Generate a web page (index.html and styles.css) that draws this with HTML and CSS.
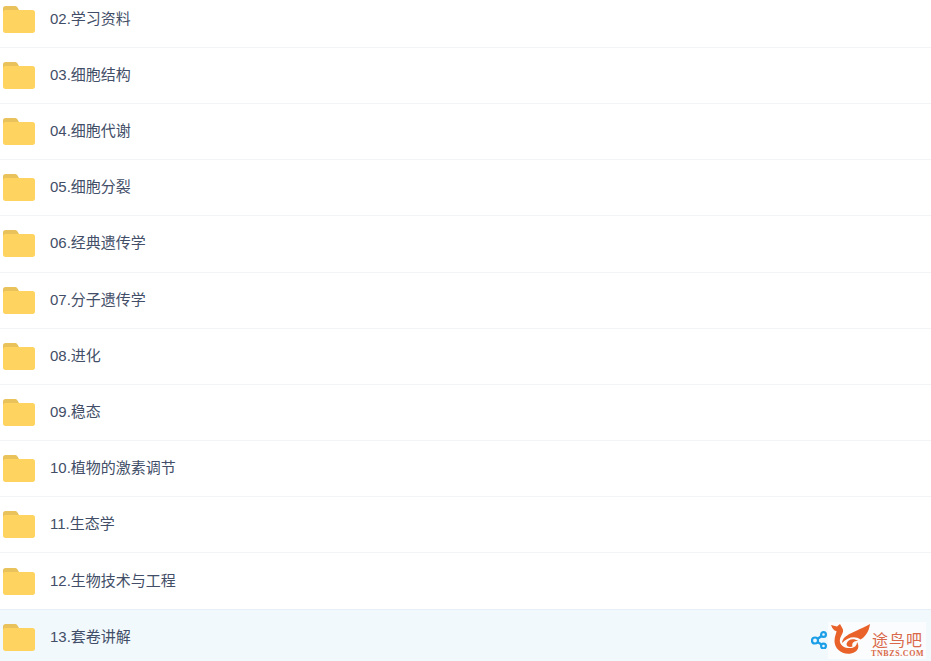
FILE: index.html
```html
<!DOCTYPE html>
<html lang="zh">
<head>
<meta charset="utf-8">
<title>文件列表</title>
<link rel="stylesheet" href="styles.css">
</head>
<body>
<svg class="defs" width="0" height="0" aria-hidden="true">
  <symbol id="folder" viewBox="0 0 32 27">
    <path d="M0 2.5C0 1 1 0 2.5 0h9c1.3 0 2.2.5 3 1.4L16 4H3v3H0z" fill="#e9c25c"/>
    <path d="M0 6.5C0 5 1 4 2.5 4h27C31 4 32 5 32 6.500V24.500C32 26 31 27 29.500 27h-27C1 27 0 26 0 24.500z" fill="#ffd35f"/>
  </symbol>
</svg>
<ul class="list">
  <li class="row"><svg class="folder"><use href="#folder"/></svg><span class="name">02.学习资料</span></li>
  <li class="row"><svg class="folder"><use href="#folder"/></svg><span class="name">03.细胞结构</span></li>
  <li class="row"><svg class="folder"><use href="#folder"/></svg><span class="name">04.细胞代谢</span></li>
  <li class="row"><svg class="folder"><use href="#folder"/></svg><span class="name">05.细胞分裂</span></li>
  <li class="row"><svg class="folder"><use href="#folder"/></svg><span class="name">06.经典遗传学</span></li>
  <li class="row"><svg class="folder"><use href="#folder"/></svg><span class="name">07.分子遗传学</span></li>
  <li class="row"><svg class="folder"><use href="#folder"/></svg><span class="name">08.进化</span></li>
  <li class="row"><svg class="folder"><use href="#folder"/></svg><span class="name">09.稳态</span></li>
  <li class="row"><svg class="folder"><use href="#folder"/></svg><span class="name">10.植物的激素调节</span></li>
  <li class="row"><svg class="folder"><use href="#folder"/></svg><span class="name">11.生态学</span></li>
  <li class="row"><svg class="folder"><use href="#folder"/></svg><span class="name">12.生物技术与工程</span></li>
  <li class="row active">
    <svg class="folder"><use href="#folder"/></svg><span class="name">13.套卷讲解</span>
    <svg class="share" viewBox="0 0 16 18">
      <g fill="none" stroke="#1d9fe8" stroke-width="2.200">
        <circle cx="4" cy="9.500" r="3"/><circle cx="12.500" cy="3.500" r="2.400"/><circle cx="12.500" cy="15" r="2.400"/>
        <path d="M6.500 8L10.500 5M6.500 11L10.500 13.500"/>
      </g>
    </svg>
    <div class="logo">
      <svg class="logo-mark" viewBox="0 0 42 32">
        <g fill="#e8622a">
          <path d="M2 2L8 3.500L11 1L13.500 5.500C15.500 9 12 12 11 16C10 20 13 24.500 19 25C25 25.500 28 23 28 19C31 24 29 29 22 30.500C13 32 5.500 26 5.500 18C5.500 13 7.500 10 7.500 8C5.500 8 3.500 6 2 2z"/>
          <path d="M13 20C14 11 27 9 41 1C40 9 36 14 31.500 16.500C26 12.500 19 14 13 20z"/>
          <path d="M17.500 21C18.500 16 25 15 29 18C24.500 18 22.500 20 23.500 23.500C20.500 24.500 17.500 23.500 17.500 21z"/>
        </g>
      </svg>
      <div class="logo-text">
        <span class="logo-cn">途鸟吧</span>
        <span class="logo-en">TNBZS.COM</span>
      </div>
    </div>
  </li>
</ul>
</body>
</html>
```

FILE: styles.css
```css
html, body {
  margin: 0;
  height: 100%;
  overflow: hidden;
  background: #fff;
}
.defs { display: block; height: 0; }
.list {
  list-style: none;
  margin: -8.4px 0 0;
  padding: 0;
  font-family: "Liberation Sans", "Noto Sans CJK SC", sans-serif;
}
.row {
  display: flex;
  align-items: center;
  box-sizing: border-box;
  height: 56.2px;
  padding-left: 3px;
  border-bottom: 1px solid #f3f4f6;
  position: relative;
}
.row.active {
  background: #f2f9fd;
  border-bottom: 0;
  border-top: 1px solid #e6eff6;
  margin-top: -1px;
  height: 57px;
}
.folder {
  width: 32px;
  height: 27px;
  flex: none;
  margin-right: 15px;
}
.name {
  font-size: 15px;
  color: #424e67;
  line-height: 20px;
  margin-bottom: 1px;
}
.share {
  position: absolute;
  left: 811px;
  top: 21px;
  width: 16px;
  height: 18px;
}
.logo {
  position: absolute;
  left: 828px;
  top: 12px;
  width: 98px;
  height: 37px;
  background: #fbfcfd;
  display: flex;
  align-items: center;
}
.logo-mark {
  width: 42px;
  height: 32px;
  flex: none;
  margin-left: 1px;
  margin-bottom: 3px;
}
.logo-text {
  display: flex;
  flex-direction: column;
  align-items: center;
  margin-top: 10px;
}
.logo-cn {
  font-size: 16px;
  line-height: 16px;
  letter-spacing: 1px;
  color: #d9694a;
}
.logo-en {
  font-family: "Liberation Serif", serif;
  font-size: 8px;
  line-height: 9px;
  font-weight: 700;
  letter-spacing: 0.6px;
  color: #d9694a;
}
```
